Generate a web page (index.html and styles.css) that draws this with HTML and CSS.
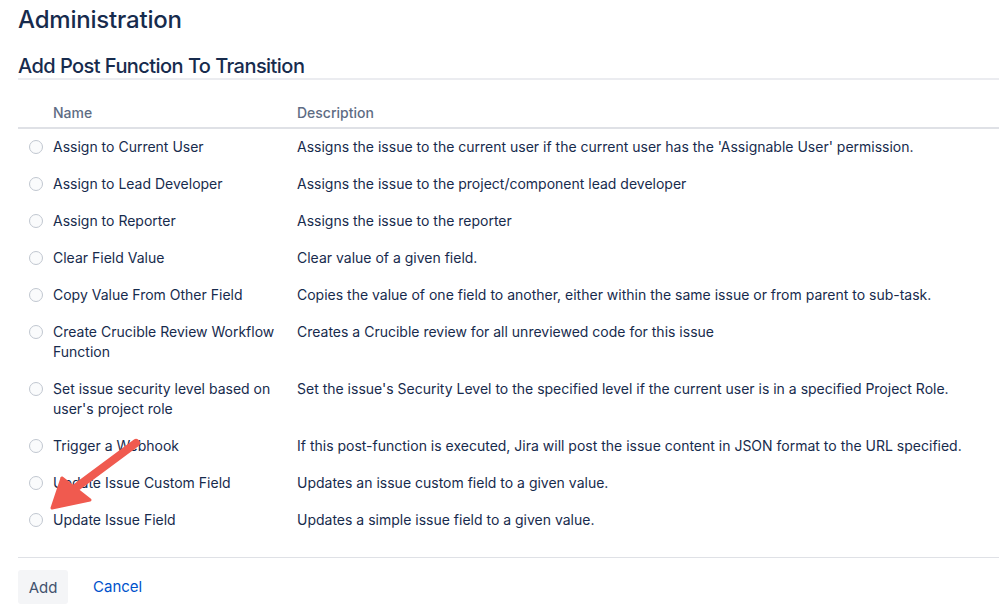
FILE: index.html
```html
<!DOCTYPE html>
<html>
<head>
<meta charset="utf-8">
<link rel="stylesheet" href="styles.css">
</head>
<body>
<div class="page">
  <h1 class="title">Administration</h1>
  <h2 class="subtitle">Add Post Function To Transition</h2>
  <table class="fn-table">
    <colgroup><col class="w-radio"><col class="w-name"><col></colgroup>
    <thead>
      <tr><th></th><th>Name</th><th>Description</th></tr>
    </thead>
    <tbody>
      <tr><td><span class="radio"></span></td><td class="c-name">Assign to Current User</td><td>Assigns the issue to the current user if the current user has the 'Assignable User' permission.</td></tr>
      <tr><td><span class="radio"></span></td><td class="c-name">Assign to Lead Developer</td><td>Assigns the issue to the project/component lead developer</td></tr>
      <tr><td><span class="radio"></span></td><td class="c-name">Assign to Reporter</td><td>Assigns the issue to the reporter</td></tr>
      <tr><td><span class="radio"></span></td><td class="c-name">Clear Field Value</td><td>Clear value of a given field.</td></tr>
      <tr><td><span class="radio"></span></td><td class="c-name">Copy Value From Other Field</td><td>Copies the value of one field to another, either within the same issue or from parent to sub-task.</td></tr>
      <tr><td><span class="radio"></span></td><td class="c-name">Create Crucible Review Workflow Function</td><td>Creates a Crucible review for all unreviewed code for this issue</td></tr>
      <tr><td><span class="radio"></span></td><td class="c-name">Set issue security level based on user's project role</td><td>Set the issue's Security Level to the specified level if the current user is in a specified Project Role.</td></tr>
      <tr><td><span class="radio"></span></td><td class="c-name">Trigger a Webhook</td><td>If this post-function is executed, Jira will post the issue content in JSON format to the URL specified.</td></tr>
      <tr><td><span class="radio"></span></td><td class="c-name">Update Issue Custom Field</td><td>Updates an issue custom field to a given value.</td></tr>
      <tr><td><span class="radio"></span></td><td class="c-name">Update Issue Field</td><td>Updates a simple issue field to a given value.</td></tr>
    </tbody>
  </table>
  <div class="footer">
    <button class="btn">Add</button>
    <a class="link" href="#">Cancel</a>
  </div>
</div>
<svg class="arrow" width="999" height="616" viewBox="0 0 999 616">
  <line x1="136" y1="443" x2="74" y2="489" stroke="#f05a4f" stroke-width="8" stroke-linecap="round"/>
  <polygon points="52,508 62,478 90,500" fill="#f05a4f" stroke="#f05a4f" stroke-width="3" stroke-linejoin="round"/>
</svg>
</body>
</html>
```
FILE: styles.css
```css
html, body {
  margin: 0;
  padding: 0;
  background: #ffffff;
}
body {
  font-family: Inter, "Noto Sans", sans-serif;
  color: #172b4d;
  font-size: 14px;
  line-height: 20px;
}
.page {
  padding: 0 0 0 18px;
}
.title {
  margin: 0;
  padding-top: 5px;
  font-size: 24px;
  line-height: 30px;
  font-weight: 500;
  letter-spacing: -0.2px;
  color: #172b4d;
}
.subtitle {
  margin: 19px 0 0 0;
  font-size: 20px;
  line-height: 24px;
  font-weight: 500;
  letter-spacing: -0.55px;
  color: #172b4d;
  border-bottom: 2px solid #ebecf0;
}
.fn-table {
  width: 100%;
  border-collapse: collapse;
  table-layout: fixed;
  margin-top: 16px;
}
.w-radio { width: 35px; }
.w-name { width: 244px; }
.fn-table th {
  text-align: left;
  font-weight: 500;
  font-size: 14px;
  color: #5e6c84;
  padding: 7px 0 4px 0;
  border-bottom: 2px solid #dfe1e6;
}
.fn-table td {
  vertical-align: top;
  padding: 8px 0 9px 0;
  color: #172b4d;
}
.fn-table td.c-name {
  padding-right: 14px;
}
.radio {
  display: block;
  width: 12px;
  height: 12px;
  margin: 3px 0 0 11px;
  border: 1px solid #c1c7d0;
  border-radius: 50%;
  background: #fafbfc;
}
.footer {
  margin-top: 18px;
  border-top: 1px solid #dfe1e6;
  padding-top: 12px;
  display: flex;
  align-items: center;
  gap: 25px;
}
.btn {
  font-family: inherit;
  font-size: 15px;
  color: #42526e;
  background: #f4f5f7;
  border: none;
  border-radius: 3px;
  width: 50px;
  height: 34px;
  padding: 0;
}
.link {
  color: #0052cc;
  text-decoration: none;
  font-size: 15px;
}
.arrow {
  position: absolute;
  left: 0;
  top: 0;
  pointer-events: none;
}
```
